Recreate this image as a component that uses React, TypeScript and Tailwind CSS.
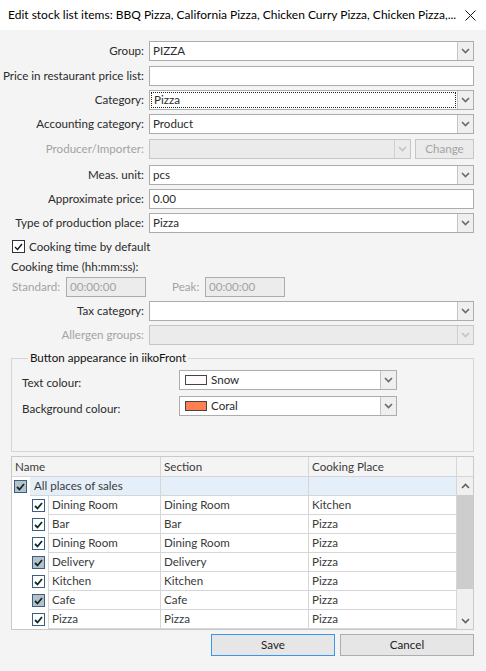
import React from "react";

const Chevron = ({ color = "#5a5a5a", up = false }: { color?: string; up?: boolean }) => (
  <svg width="9" height="6" viewBox="0 0 9 6" className="block">
    <path d={up ? "M1 5 L4.5 1.5 L8 5" : "M1 1 L4.5 4.5 L8 1"} fill="none" stroke={color} strokeWidth="1.6" />
  </svg>
);

const Combo = ({
  value = "",
  focused = false,
  disabled = false,
  className = "",
}: {
  value?: string;
  focused?: boolean;
  disabled?: boolean;
  className?: string;
}) => (
  <div
    className={`h-[20px] flex border ${disabled ? "border-[#c6c6c6] bg-[#ebebeb]" : "border-[#acacac] bg-white"} ${className}`}
  >
    {focused ? (
      <div className="flex-1 m-[1px] border border-dotted border-[#222] flex items-center pl-[2px] leading-none">
        {value}
      </div>
    ) : (
      <div className="flex-1 flex items-center pl-[3px] leading-none">{value}</div>
    )}
    <div
      className={`w-[16px] flex items-center justify-center border-l ${disabled ? "border-[#d0d0d0] bg-[#ebebeb]" : "border-[#c3c3c3] bg-[#efefef]"}`}
    >
      <Chevron color={disabled ? "#c4c4c4" : "#6a6a6a"} />
    </div>
  </div>
);

const TextInput = ({ value = "" }: { value?: string }) => (
  <div className="h-[20px] flex-1 border border-[#acacac] bg-white flex items-center pl-[3px] leading-none">{value}</div>
);

const Row = ({
  label,
  mt,
  disabled = false,
  children,
}: {
  label: string;
  mt: string;
  disabled?: boolean;
  children: React.ReactNode;
}) => (
  <div className={`flex items-center h-[20px] ${mt}`}>
    <div className={`w-[138px] shrink-0 pr-[5px] flex justify-end leading-none whitespace-nowrap ${disabled ? "text-[#a3a3a3]" : "text-[#2b2b2b]"}`}>
      <span className="shrink-0">{label}</span>
    </div>
    <div className="flex-1 flex">{children}</div>
  </div>
);

const GridCheck = ({ gray = false }: { gray?: boolean }) => (
  <div
    className={`w-[13px] h-[13px] border border-[#3a5f80] flex items-center justify-center ${gray ? "bg-[#b7c1ca]" : "bg-white"}`}
  >
    <svg width="9" height="8" viewBox="0 0 9 8">
      <path d="M1 4 L3.5 6.5 L8 1" fill="none" stroke="#0f2a2a" strokeWidth="1.8" />
    </svg>
  </div>
);

const rows = [
  { name: "Dining Room", section: "Dining Room", place: "Kitchen", gray: false },
  { name: "Bar", section: "Bar", place: "Pizza", gray: false },
  { name: "Dining Room", section: "Dining Room", place: "Pizza", gray: false },
  { name: "Delivery", section: "Delivery", place: "Pizza", gray: true },
  { name: "Kitchen", section: "Kitchen", place: "Pizza", gray: false },
  { name: "Cafe", section: "Cafe", place: "Pizza", gray: true },
  { name: "Pizza", section: "Pizza", place: "Pizza", gray: false },
];

export default function App() {
  return (
    <div className="w-[486px] h-[671px] bg-[#f4f4f4] flex flex-col text-[11.6px] text-[#2b2b2b] font-['Lato',sans-serif] overflow-hidden">
      {/* Title bar */}
      <div className="h-[30px] bg-white flex items-center pl-[8px] pr-[10px] text-black shrink-0 text-[12px]">
        <span className="whitespace-nowrap leading-none">
          Edit stock list items: BBQ Pizza, California Pizza, Chicken Curry Pizza, Chicken Pizza,...
        </span>
        <svg width="11" height="11" viewBox="0 0 11 11" className="ml-auto">
          <path d="M0.5 0.5 L10.5 10.5 M10.5 0.5 L0.5 10.5" stroke="#111" strokeWidth="1" />
        </svg>
      </div>

      <div className="flex flex-col pl-[11px] pr-[12px]">
        <Row label="Group:" mt="mt-[11px]">
          <Combo value="PIZZA" className="flex-1" />
        </Row>
        <Row label="Price in restaurant price list:" mt="mt-[5px]">
          <TextInput />
        </Row>
        <Row label="Category:" mt="mt-[4px]">
          <Combo value="Pizza" focused className="flex-1" />
        </Row>
        <Row label="Accounting category:" mt="mt-[4px]">
          <Combo value="Product" className="flex-1" />
        </Row>
        <Row label="Producer/Importer:" mt="mt-[5px]" disabled>
          <Combo disabled className="w-[262px]" />
          <div className="ml-[4px] flex-1 h-[20px] border border-[#c6c6c6] bg-[#ebebeb] flex items-center justify-center text-[#a3a3a3] leading-none">
            Change
          </div>
        </Row>
        <Row label="Meas. unit:" mt="mt-[6px]">
          <Combo value="pcs" className="flex-1" />
        </Row>
        <Row label="Approximate price:" mt="mt-[4px]">
          <TextInput value="0.00" />
        </Row>
        <Row label="Type of production place:" mt="mt-[4px]">
          <Combo value="Pizza" className="flex-1" />
        </Row>

        {/* Checkbox */}
        <div className="flex items-center mt-[7px] h-[13px]">
          <div className="ml-[1px] w-[13px] h-[13px] border border-[#333] bg-white flex items-center justify-center">
            <svg width="9" height="8" viewBox="0 0 9 8">
              <path d="M1 4 L3.5 6.5 L8 1" fill="none" stroke="#111" strokeWidth="1.3" />
            </svg>
          </div>
          <span className="ml-[4px] leading-none">Cooking time by default</span>
        </div>
        <div className="mt-[7px] h-[14px] flex items-center leading-none">Cooking time (hh:mm:ss):</div>

        <div className="flex items-center h-[20px] mt-[3px] text-[#a3a3a3]">
          <span className="ml-[1px] w-[54px] leading-none whitespace-nowrap">Standard:</span>
          <div className="w-[80px] h-[20px] border border-[#acacac] bg-[#ececec] flex items-center pl-[3px] leading-none">00:00:00</div>
          <span className="ml-[26px] w-[33px] leading-none">Peak:</span>
          <div className="w-[80px] h-[20px] border border-[#acacac] bg-[#ececec] flex items-center pl-[3px] leading-none">00:00:00</div>
        </div>

        <Row label="Tax category:" mt="mt-[4px]">
          <Combo className="flex-1" />
        </Row>
        <Row label="Allergen groups:" mt="mt-[4px]" disabled>
          <Combo disabled className="flex-1" />
        </Row>

        {/* Group box */}
        <fieldset className="mt-[5px] border border-[#d6d6d6] pl-[10px] pr-[0px] pb-[35px] pt-[4px]">
          <legend className="ml-[6px] px-[2px] text-[#111] leading-[16px]">Button appearance in iikoFront</legend>
          <div className="flex items-start h-[20px]">
            <div className="w-[157px] mt-[7px] leading-none">Text colour:</div>
            <div className="w-[218px] h-[20px] border border-[#acacac] bg-white flex">
              <div className="flex-1 flex items-center pl-[5px] leading-none">
                <span className="w-[22px] h-[10px] border border-[#444] bg-[#fffafa] mr-[4px]" />
                Snow
              </div>
              <div className="w-[16px] flex items-center justify-center border-l border-[#c3c3c3] bg-[#efefef]">
                <Chevron color="#6a6a6a" />
              </div>
            </div>
          </div>
          <div className="flex items-start h-[20px] mt-[6px]">
            <div className="w-[157px] mt-[7px] leading-none">Background colour:</div>
            <div className="w-[218px] h-[20px] border border-[#acacac] bg-white flex">
              <div className="flex-1 flex items-center pl-[5px] leading-none">
                <span className="w-[22px] h-[10px] border border-[#444] bg-[#ff7f50] mr-[4px]" />
                Coral
              </div>
              <div className="w-[16px] flex items-center justify-center border-l border-[#c3c3c3] bg-[#efefef]">
                <Chevron color="#6a6a6a" />
              </div>
            </div>
          </div>
        </fieldset>

        {/* Grid */}
        <div className="mt-[4px] border border-[#c9c9c9] bg-white flex flex-col text-[#3a3a3a]">
          <div className="flex h-[20px] bg-[#f4f4f4] border-b border-[#d6d6d6]">
            <div className="w-[149px] border-r border-[#d6d6d6] pl-[3px] flex items-center leading-none">Name</div>
            <div className="w-[148px] border-r border-[#d6d6d6] pl-[3px] flex items-center leading-none">Section</div>
            <div className="w-[148px] border-r border-[#d6d6d6] pl-[3px] flex items-center leading-none">Cooking Place</div>
            <div className="flex-1" />
          </div>
          <div className="flex">
            <div className="w-[445px] flex flex-col">
              {/* All places row */}
              <div className="flex h-[19px]">
                <div className="w-[18px] flex items-center justify-end pr-[3px]">
                  <GridCheck gray />
                </div>
                <div className="flex-1 flex bg-[#e4eff9] border-b border-[#d6d6d6]">
                  <div className="w-[131px] border-r border-[#d6d6d6] pl-[4px] flex items-center leading-none">All places of sales</div>
                  <div className="w-[148px] border-r border-[#d6d6d6]" />
                  <div className="w-[148px] border-r border-[#d6d6d6]" />
                </div>
              </div>
              {rows.map((r, i) => (
                <div key={i} className="flex h-[19px]">
                  <div className="w-[36px] flex items-center justify-end pr-[3px]">
                    <GridCheck gray={r.gray} />
                  </div>
                  <div className="flex-1 flex border-b border-[#d6d6d6]">
                    <div className="w-[113px] border-l border-r border-[#d6d6d6] pl-[3px] flex items-center leading-none">{r.name}</div>
                    <div className="w-[148px] border-r border-[#d6d6d6] pl-[3px] flex items-center leading-none">{r.section}</div>
                    <div className="w-[148px] border-r border-[#d6d6d6] pl-[3px] flex items-center leading-none">{r.place}</div>
                  </div>
                </div>
              ))}
            </div>
            {/* Scrollbar */}
            <div className="flex-1 flex flex-col bg-[#f0f0f0]">
              <div className="h-[18px] flex items-center justify-center">
                <Chevron color="#606060" up />
              </div>
              <div className="h-[94px] bg-[#cdcdcd]" />
              <div className="flex-1 flex items-end justify-center pb-[5px]">
                <Chevron color="#606060" />
              </div>
            </div>
          </div>
        </div>

        {/* Buttons */}
        <div className="flex justify-end gap-[5px] mt-[4px]">
          <div className="w-[124px] h-[22px] border border-[#3c95e6] bg-[#e6e6e6] flex items-center justify-center leading-none text-[#222]">
            Save
          </div>
          <div className="w-[134px] h-[22px] border border-[#adadad] bg-[#e6e6e6] flex items-center justify-center leading-none text-[#222]">
            Cancel
          </div>
        </div>
      </div>
    </div>
  );
}
